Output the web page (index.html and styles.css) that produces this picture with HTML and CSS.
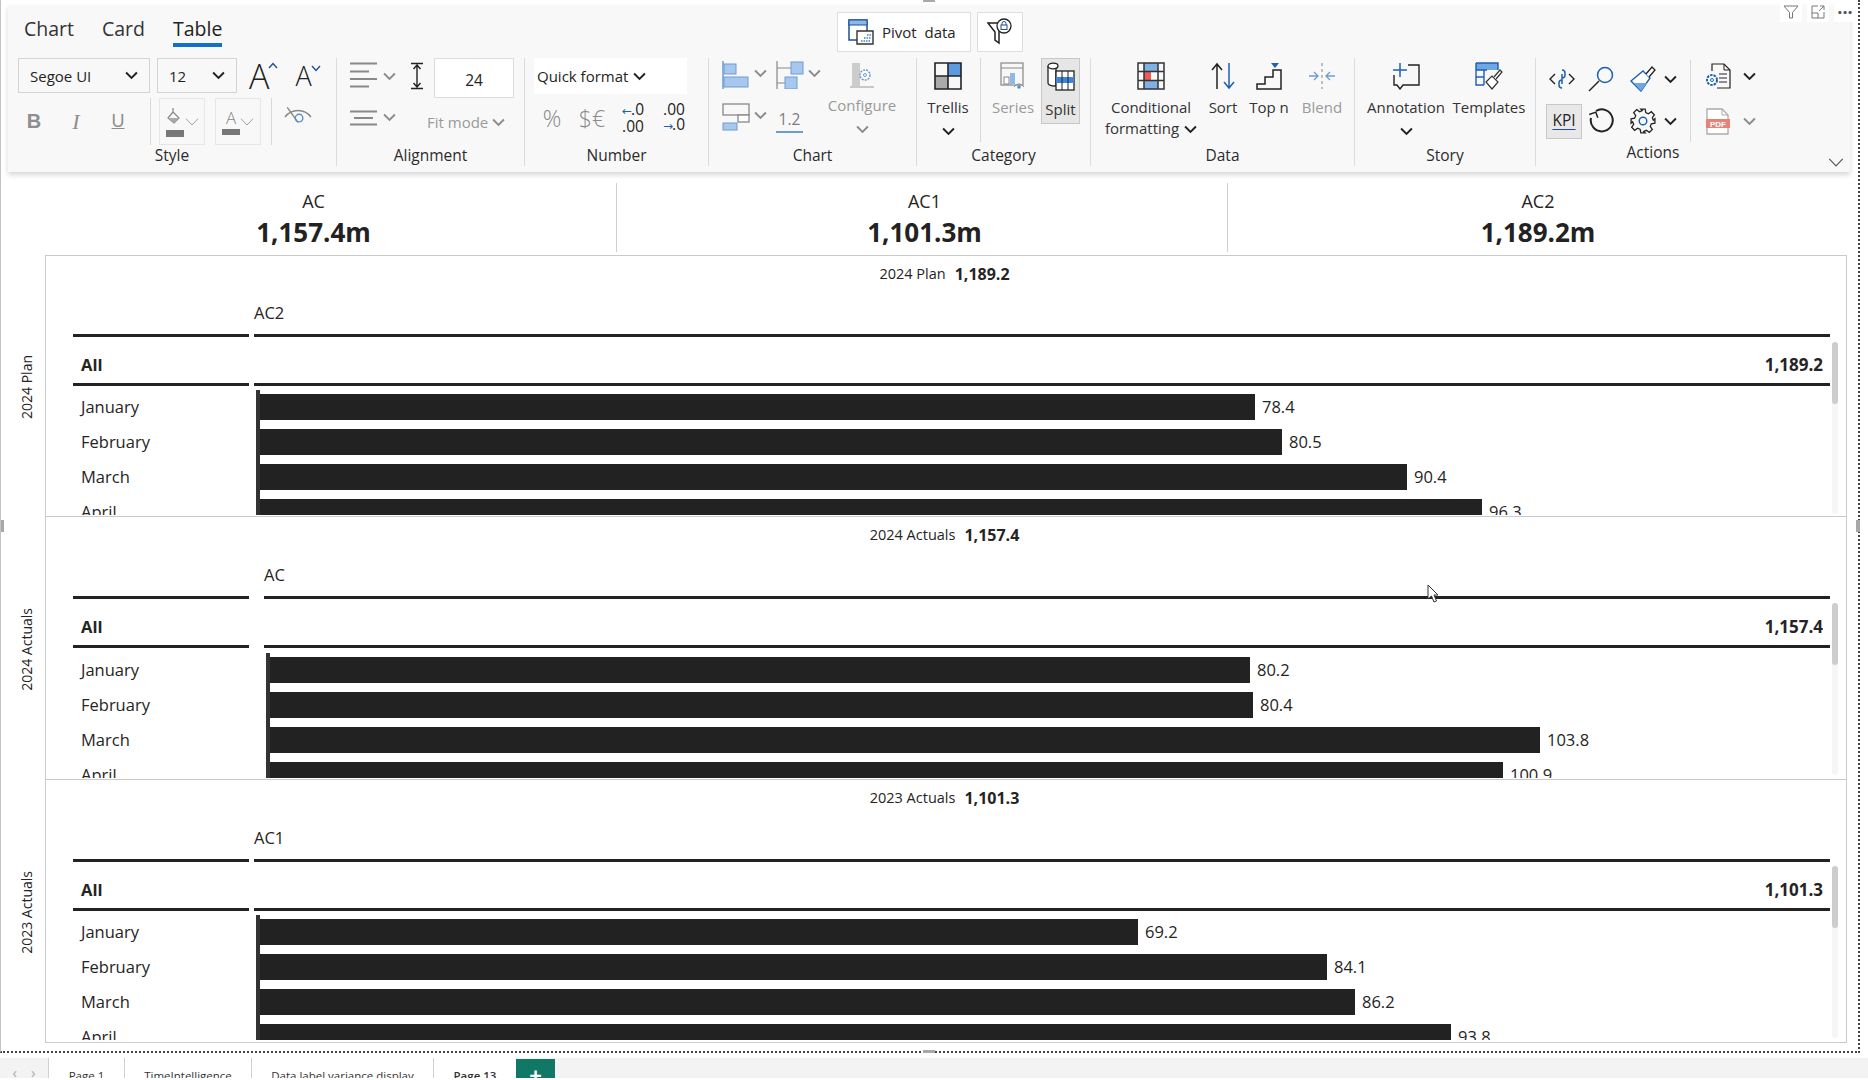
FILE: index.html
```html
<!DOCTYPE html>
<html lang="en">
<head>
    <meta charset="UTF-8">
    <title>Table</title>
    <link rel="stylesheet" href="styles.css">
</head>
<body>

<svg class="sprite" width="0" height="0">
    <symbol id="chev" viewBox="0 0 12 8"><path d="M1 1.2 6 6.2 11 1.2" fill="none" stroke="currentColor" stroke-width="1.8"/></symbol>
    <symbol id="chevThin" viewBox="0 0 14 8"><path d="M1 .8 7 7 13 .8" fill="none" stroke="currentColor" stroke-width="1"/></symbol>
</svg>

<div id="frame">
    <div class="handle handle-top"></div>
    <div class="handle handle-left"></div>
    <div class="handle handle-right"></div>
    <div class="handle handle-bottom"></div>

    <div id="visual-icons">
        <span><svg width="16" height="16" viewBox="0 0 16 16"><path d="M1 2h14L9.5 8.5V14h-3V8.5z" fill="none" stroke="#777"/></svg></span>
        <span><svg width="16" height="16" viewBox="0 0 16 16"><path d="M8 2H2v12h12V8M2 9h6v5M10 2h4v4M14 2 9 7" fill="none" stroke="#777"/></svg></span>
        <span class="dots">&middot;&middot;&middot;</span>
    </div>

    <div id="ribbon">
        <div class="tab-row">
            <div class="tabs">
                <span class="tab">Chart</span>
                <span class="tab">Card</span>
                <span class="tab active">Table</span>
            </div>
            <div class="top-btn pivot-btn">
                <svg width="28" height="28" viewBox="0 0 28 28"><rect x="2" y="2" width="18" height="20" fill="#fff" stroke="#1f4e9c" stroke-width="1.5"/><rect x="2" y="2" width="18" height="5" fill="#8db8e8" stroke="#1f4e9c"/><path d="M10 13h16v13H10z" fill="#fff" stroke="#333" stroke-width="1.4"/><path d="M14 23h10M17 20h7M20 17h4" stroke="#6d9fd8" stroke-width="2" stroke-dasharray="1.5 1"/></svg>
                <span>Pivot&nbsp; data</span>
            </div>
            <div class="top-btn filter-btn">
                <svg width="26" height="28" viewBox="0 0 26 28"><path d="M1 5h17l-6 9v11l-4-3v-8z" fill="#fff" stroke="#222" stroke-width="1.5"/><circle cx="17" cy="8" r="7" fill="#fff" stroke="#222" stroke-width="1.3"/><rect x="14" y="7" width="6" height="4.5" fill="none" stroke="#1f4e9c"/><path d="M15 7V5.5a2 2 0 0 1 4 0V7" fill="none" stroke="#1f4e9c"/></svg>
            </div>
        </div>

        <div class="groups">
            <section class="group group-style">
                <div class="style-row">
                    <div class="select font-select"><span>Segoe UI</span><svg class="chev"><use href="#chev"/></svg></div>
                    <div class="select size-select"><span>12</span><svg class="chev"><use href="#chev"/></svg></div>
                    <span class="grow big-a">A<svg width="10" height="7" viewBox="0 0 10 7"><path d="M1 6 5 1.5 9 6" fill="none" stroke="#1f4e9c" stroke-width="1.4"/></svg></span>
                    <span class="grow small-a">A<svg width="10" height="7" viewBox="0 0 10 7"><path d="M1 1 5 5.5 9 1" fill="none" stroke="#1f4e9c" stroke-width="1.4"/></svg></span>
                </div>
                <div class="style-row second">
                    <span class="fmt fmt-b">B</span>
                    <span class="fmt fmt-i">I</span>
                    <span class="fmt fmt-u">U</span>
                    <span class="vline first"></span>
                    <div class="color-btn">
                        <svg width="20" height="30" viewBox="0 0 20 30"><path d="M8 1v4M3 11l5-6 6 6-5 5z" fill="none" stroke="#888" stroke-width="1.2"/><path d="M3 11h11l-5 5z" fill="#aaa"/><rect x="1" y="23" width="18" height="7" fill="#777"/></svg>
                        <svg class="chev-thin"><use href="#chevThin"/></svg>
                    </div>
                    <div class="color-btn">
                        <span class="a-mark">A<i></i></span>
                        <svg class="chev-thin"><use href="#chevThin"/></svg>
                    </div>
                    <span class="vline second-line"></span>
                    <svg class="eye" width="28" height="24" viewBox="0 0 26 22"><path d="M1 11c6-8 18-8 24 0" fill="none" stroke="#888" stroke-width="1.3"/><path d="M3 2l10 14" stroke="#888" stroke-width="1.3"/><circle cx="14" cy="12" r="3.5" fill="none" stroke="#5b8fc9" stroke-width="1.3"/></svg>
                </div>
                <div class="group-label">Style</div>
            </section>

            <section class="group group-align">
                <div class="align-row">
                    <svg width="28" height="26" viewBox="0 0 28 26"><path d="M0 1.5h27M0 9.5h19M0 17h27M0 24.5h19" stroke="#888" stroke-width="1.8"/></svg>
                    <svg class="chev gray"><use href="#chev"/></svg>
                    <svg class="height-icon" width="12" height="28" viewBox="0 0 12 28"><path d="M0 1.5h12M0 26.5h12M6 3v22M2.500 7 6 3l3.500 4M2.500 21 6 25l3.500-4" fill="none" stroke="#222" stroke-width="1.4"/></svg>
                    <div class="row-input">24</div>
                </div>
                <div class="align-row second">
                    <svg width="28" height="16" viewBox="0 0 28 16"><path d="M0 1.500h27M4 8h19M0 14.500h27" stroke="#888" stroke-width="1.8"/></svg>
                    <svg class="chev gray"><use href="#chev"/></svg>
                    <span class="muted fit">Fit mode</span>
                    <svg class="chev gray"><use href="#chev"/></svg>
                </div>
                <div class="group-label">Alignment</div>
            </section>

            <section class="group group-number">
                <div class="quick"><span>Quick format</span><svg class="chev"><use href="#chev"/></svg></div>
                <div class="num-row">
                    <span class="sym">%</span>
                    <span class="sym">$&euro;</span>
                    <span class="dec"><span><b>&larr;</b>.0</span><span>.00</span></span>
                    <span class="dec"><span>.00</span><span><b>&rarr;</b>.0</span></span>
                </div>
                <div class="group-label">Number</div>
            </section>

            <section class="group group-chart">
                <div class="chart-tools">
                    <div class="chart-grid">
                        <svg width="28" height="28" viewBox="0 0 28 28"><path d="M1 0v28" stroke="#6f9bd1" stroke-width="1.500"/><rect x="2" y="3" width="12" height="10" fill="#a6c8ee" stroke="#6f9bd1"/><rect x="2" y="16" width="24" height="10" fill="#a6c8ee" stroke="#6f9bd1"/></svg>
                        <svg class="chev gray"><use href="#chev"/></svg>
                        <svg width="28" height="28" viewBox="0 0 28 28"><path d="M1 0v28M1 7h15M1 22h8" stroke="#888" stroke-width="1.200"/><rect x="15" y="1" width="12" height="12" fill="#a6c8ee" stroke="#6f9bd1"/><rect x="9" y="16" width="12" height="12" fill="#a6c8ee" stroke="#6f9bd1"/></svg>
                        <svg class="chev gray"><use href="#chev"/></svg>
                        <svg width="28" height="28" viewBox="0 0 28 28"><rect x="1" y="1" width="26" height="11" fill="none" stroke="#888" stroke-width="1.300"/><rect x="16" y="12" width="11" height="7" fill="#fff" stroke="#888" stroke-width="1.300"/><rect x="1" y="20" width="14" height="7" fill="#a6c8ee" stroke="#6f9bd1"/></svg>
                        <svg class="chev gray"><use href="#chev"/></svg>
                        <span class="one-two">1.2</span>
                    </div>
                    <div class="tool tool-configure">
                        <svg width="28" height="26" viewBox="0 0 28 26"><path d="M2 25h24" stroke="#999"/><rect x="4" y="1" width="8" height="24" fill="#ccc"/><circle cx="17" cy="13" r="5" fill="#fff" stroke="#6f9bd1" stroke-width="1.500" stroke-dasharray="2 1"/><circle cx="17" cy="13" r="1.500" fill="none" stroke="#6f9bd1"/></svg>
                        <span class="tool-text muted">Configure</span>
                        <svg class="chev gray"><use href="#chev"/></svg>
                    </div>
                </div>
                <div class="group-label">Chart</div>
            </section>

            <section class="group group-category">
                <div class="tool-line">
                    <div class="tool tool-trellis">
                        <svg width="28" height="28" viewBox="0 0 28 28"><rect x="14" y="1" width="13" height="13" fill="#5b9be0"/><rect x="1" y="14" width="13" height="13" fill="#aaa"/><path d="M1 1h26v26H1zM14 1v26M1 14h26" fill="none" stroke="#222" stroke-width="1.600"/></svg>
                        <span class="tool-text">Trellis</span>
                        <svg class="chev"><use href="#chev"/></svg>
                    </div>
                    <span class="vline cat-line"></span>
                    <div class="tool tool-series">
                        <svg width="26" height="28" viewBox="0 0 26 28"><rect x="1" y="1" width="22" height="22" fill="none" stroke="#888" stroke-width="1.200"/><path d="M1 6h22" stroke="#888"/><rect x="4" y="15" width="5" height="7" fill="#fff" stroke="#888"/><rect x="10" y="11" width="5" height="11" fill="#8db8e8"/><path d="M14 25c3-4 7-4 10 0" fill="none" stroke="#888"/><circle cx="19" cy="25" r="1.800" fill="#5b8fc9"/></svg>
                        <span class="tool-text muted">Series</span>
                    </div>
                    <div class="tool tool-split">
                        <svg width="28" height="30" viewBox="0 0 28 30"><path d="M1 4v17c0 2 4 3 8 3V4" fill="#fff" stroke="#222" stroke-width="1.300"/><ellipse cx="6" cy="4" rx="5" ry="2.800" fill="#fff" stroke="#222" stroke-width="1.300"/><rect x="9" y="9" width="18" height="19" fill="#fff" stroke="#222" stroke-width="1.300"/><rect x="9" y="15" width="18" height="6" fill="#3f86d8"/><path d="M15 9v19M21 9v19" stroke="#222"/></svg>
                        <span class="tool-text">Split</span>
                    </div>
                </div>
                <div class="group-label">Category</div>
            </section>

            <section class="group group-data">
                <div class="tool-line">
                    <div class="tool tool-cond">
                        <svg width="28" height="28" viewBox="0 0 28 28"><rect x="7" y="1" width="14" height="8" fill="#7fb0e6"/><rect x="7" y="19" width="14" height="8" fill="#7fb0e6"/><rect x="7" y="10" width="7" height="9" fill="#ee5a55"/><path d="M1 1h26v26H1zM1 9.500h26M1 18.500h26M7 1v26M21 1v26" fill="none" stroke="#333" stroke-width="1.500"/></svg>
                        <span class="tool-text">Conditional</span>
                        <span class="tool-text">formatting <svg class="chev"><use href="#chev"/></svg></span>
                    </div>
                    <div class="tool tool-sort">
                        <svg width="26" height="28" viewBox="0 0 26 28"><path d="M7 27V2M2 8l5-6 5 6" fill="none" stroke="#222" stroke-width="1.500"/><path d="M19 1v25M14 20l5 6 5-6" fill="none" stroke="#1f5fb0" stroke-width="1.500"/></svg>
                        <span class="tool-text">Sort</span>
                    </div>
                    <div class="tool tool-topn">
                        <svg width="26" height="28" viewBox="0 0 26 28"><path d="M1 27h24V8h-8v7H9v7H1z" fill="none" stroke="#222" stroke-width="1.500"/><path d="M15 1h8l-4 5z" fill="#1f5fb0"/></svg>
                        <span class="tool-text">Top n</span>
                    </div>
                    <div class="tool tool-blend">
                        <svg width="28" height="28" viewBox="0 0 28 28"><path d="M14 1v26" stroke="#aaa" stroke-dasharray="3 3" stroke-width="1.500"/><path d="M1 14h9M6 10l4 4-4 4M27 14h-9M22 10l-4 4 4 4" fill="none" stroke="#6f9bd1" stroke-width="1.300"/></svg>
                        <span class="tool-text muted">Blend</span>
                    </div>
                </div>
                <div class="group-label">Data</div>
            </section>

            <section class="group group-story">
                <div class="tool-line">
                    <div class="tool tool-anno">
                        <svg width="28" height="28" viewBox="0 0 28 28"><path d="M16 3h11v20H11l-3 4-3-4H2V13" fill="none" stroke="#222" stroke-width="1.400"/><path d="M8 1v14M1 8h14" stroke="#1f5fb0" stroke-width="1.500"/></svg>
                        <span class="tool-text">Annotation</span>
                        <svg class="chev"><use href="#chev"/></svg>
                    </div>
                    <div class="tool tool-templates">
                        <svg width="28" height="28" viewBox="0 0 28 28"><rect x="1" y="1" width="22" height="7" fill="#6fa6e4"/><path d="M1 1h22v7M1 1v22h8M1 8h11M1 15h8M9 8v15" fill="none" stroke="#1f5fb0" stroke-width="1.400"/><path d="M11 20l6-6 6 6-6 7z" fill="#fff" stroke="#333" stroke-width="1.200"/><path d="M19 15l6-7 2 2-6 7" fill="#fff" stroke="#333" stroke-width="1.200"/></svg>
                        <span class="tool-text">Templates</span>
                    </div>
                </div>
                <div class="group-label">Story</div>
            </section>

            <section class="group group-actions">
                <div class="actions-body">
                    <div class="actions-grid">
                        <svg width="26" height="22" viewBox="0 0 26 22"><path d="M6 6l-5 5 5 5M20 6l5 5-5 5" fill="none" stroke="#222" stroke-width="1.400"/><path d="M13 2a3 3 0 0 1 3 3v2a3 3 0 0 1-3 3M13 20a3 3 0 0 1-3-3v-2a3 3 0 0 1 3-3M13 6v10" fill="none" stroke="#1f5fb0" stroke-width="1.500"/></svg>
                        <svg width="26" height="26" viewBox="0 0 26 26"><circle cx="17" cy="9" r="7.500" fill="none" stroke="#1f5fb0" stroke-width="1.500"/><path d="M11 15 1 25" stroke="#222" stroke-width="1.500"/></svg>
                        <svg width="26" height="26" viewBox="0 0 26 26"><path d="M1 15 13 5l7 7-9 13z" fill="#fff" stroke="#1f5fb0" stroke-width="1.400"/><path d="M4 17h13l-6 8z" fill="#6fa6e4"/><path d="M16 8l6-7 3 3-6 7" fill="#fff" stroke="#222" stroke-width="1.300"/></svg>
                        <svg class="chev"><use href="#chev"/></svg>
                        <span class="kpi-btn">KPI</span>
                        <svg width="26" height="26" viewBox="0 0 26 26"><path d="M8 3a11 11 0 1 1-5 7" fill="none" stroke="#222" stroke-width="2"/><path d="M2 5l7 0 0 6" fill="none" stroke="#222" stroke-width="1.500" transform="rotate(-20 6 8)"/></svg>
                        <svg width="26" height="26" viewBox="0 0 24 24"><circle cx="12" cy="12" r="3.500" fill="none" stroke="#1f5fb0" stroke-width="1.300"/><path d="M10 1h4l.6 3.300 2.300 1 2.800-1.900 2.800 2.800-1.900 2.800 1 2.300L23 10v4l-3.300.6-1 2.300 1.900 2.800-2.800 2.800-2.800-1.900-2.300 1L14 23h-4l-.6-3.300-2.300-1-2.800 1.900-2.800-2.800 1.900-2.800-1-2.300L1 14v-4l3.300-.6 1-2.300-1.900-2.800 2.800-2.800 2.800 1.900 2.300-1z" fill="none" stroke="#222" stroke-width="1.200"/></svg>
                        <svg class="chev"><use href="#chev"/></svg>
                    </div>
                    <span class="vline actions-line"></span>
                    <div class="export-col">
                        <div class="export-row">
                            <svg width="26" height="26" viewBox="0 0 26 26"><path d="M7 8V1h12l6 6v18H12" fill="none" stroke="#222" stroke-width="1.200"/><path d="M19 1v6h6M14 11h8M14 15h8M14 19h8" fill="none" stroke="#222"/><circle cx="7" cy="17" r="5" fill="#fff" stroke="#1f5fb0" stroke-width="2" stroke-dasharray="2.500 1"/><circle cx="7" cy="17" r="1.500" fill="none" stroke="#1f5fb0"/></svg>
                            <svg class="chev"><use href="#chev"/></svg>
                        </div>
                        <div class="export-row">
                            <svg width="26" height="27" viewBox="0 0 26 27"><path d="M2 26V1h15l6 6v19z" fill="#fff" stroke="#aaa" stroke-width="1.300"/><path d="M17 1v6h6" fill="none" stroke="#aaa"/><rect x="1" y="11" width="24" height="9" fill="#e98276"/><text x="13" y="18.500" class="pdf-text">PDF</text></svg>
                            <svg class="chev gray"><use href="#chev"/></svg>
                        </div>
                    </div>
                </div>
                <div class="group-label actions-label">Actions</div>
                <svg class="collapse"><use href="#chevThin"/></svg>
            </section>
        </div>
    </div>

    <div id="kpis">
        <div class="kpi"><div class="kpi-name">AC</div><div class="kpi-value">1,157.4m</div></div>
        <div class="kpi"><div class="kpi-name">AC1</div><div class="kpi-value">1,101.3m</div></div>
        <div class="kpi"><div class="kpi-name">AC2</div><div class="kpi-value">1,189.2m</div></div>
    </div>

    <div id="panels">
        <div class="panel-row row-plan">
            <div class="side-label"><span>2024 Plan</span></div>
            <div class="panel">
                <div class="panel-title"><span>2024 Plan</span><b>1,189.2</b></div>
                <div class="table-head"><div class="cat-cell"></div><div class="val-cell">AC2</div></div>
                <div class="table-total"><div class="cat-cell">All</div><div class="val-cell">1,189.2</div></div>
                <div class="rows">
                    <div class="row"><div class="cat-cell">January</div><div class="val-cell"><div class="bar" style="width: 995px"></div><span>78.4</span></div></div>
                    <div class="row"><div class="cat-cell">February</div><div class="val-cell"><div class="bar" style="width: 1022px"></div><span>80.5</span></div></div>
                    <div class="row"><div class="cat-cell">March</div><div class="val-cell"><div class="bar" style="width: 1147px"></div><span>90.4</span></div></div>
                    <div class="row"><div class="cat-cell">April</div><div class="val-cell"><div class="bar" style="width: 1222px"></div><span>96.3</span></div></div>
                </div>
                <div class="scrollbar"><div class="thumb"></div></div>
            </div>
        </div>
        <div class="panel-row">
            <div class="side-label"><span>2024 Actuals</span></div>
            <div class="panel wide-gap">
                <div class="panel-title"><span>2024 Actuals</span><b>1,157.4</b></div>
                <div class="table-head"><div class="cat-cell"></div><div class="val-cell">AC</div></div>
                <div class="table-total"><div class="cat-cell">All</div><div class="val-cell">1,157.4</div></div>
                <div class="rows">
                    <div class="row"><div class="cat-cell">January</div><div class="val-cell"><div class="bar" style="width: 980px"></div><span>80.2</span></div></div>
                    <div class="row"><div class="cat-cell">February</div><div class="val-cell"><div class="bar" style="width: 983px"></div><span>80.4</span></div></div>
                    <div class="row"><div class="cat-cell">March</div><div class="val-cell"><div class="bar" style="width: 1270px"></div><span>103.8</span></div></div>
                    <div class="row"><div class="cat-cell">April</div><div class="val-cell"><div class="bar" style="width: 1233px"></div><span>100.9</span></div></div>
                </div>
                <div class="scrollbar"><div class="thumb"></div></div>
            </div>
        </div>
        <div class="panel-row row-last">
            <div class="side-label"><span>2023 Actuals</span></div>
            <div class="panel">
                <div class="panel-title"><span>2023 Actuals</span><b>1,101.3</b></div>
                <div class="table-head"><div class="cat-cell"></div><div class="val-cell">AC1</div></div>
                <div class="table-total"><div class="cat-cell">All</div><div class="val-cell">1,101.3</div></div>
                <div class="rows">
                    <div class="row"><div class="cat-cell">January</div><div class="val-cell"><div class="bar" style="width: 878px"></div><span>69.2</span></div></div>
                    <div class="row"><div class="cat-cell">February</div><div class="val-cell"><div class="bar" style="width: 1067px"></div><span>84.1</span></div></div>
                    <div class="row"><div class="cat-cell">March</div><div class="val-cell"><div class="bar" style="width: 1095px"></div><span>86.2</span></div></div>
                    <div class="row"><div class="cat-cell">April</div><div class="val-cell"><div class="bar" style="width: 1191px"></div><span>93.8</span></div></div>
                </div>
                <div class="scrollbar"><div class="thumb"></div></div>
            </div>
        </div>
    </div>

    <svg id="cursor" width="12" height="20" viewBox="0 0 12 20"><path d="M1 1v14l3.500-3 2.500 6 2.500-1-2.500-6H11z" fill="#fff" stroke="#333"/></svg>
</div>

<div id="page-tabs">
    <div class="page-nav"><span>&lsaquo;</span><span>&rsaquo;</span></div>
    <div class="page-tab tab-page1">Page 1</div>
    <div class="page-tab tab-time">TimeIntelligence</div>
    <div class="page-tab tab-label">Data label variance display</div>
    <div class="page-tab tab-13">Page 13</div>
    <div class="page-add">+</div>
</div>

</body>
</html>
```

FILE: styles.css
```css
* {
    box-sizing: border-box;
}
html, body {
    margin: 0;
    height: 1080px;
    overflow: hidden;
}
body {
    font-family: "Open Sans", "Noto Sans", sans-serif;
    color: #252423;
    background: #fff;
}
.sprite {
    position: absolute;
}
svg {
    flex: none;
    display: block;
}
.chev {
    width: 13px;
    height: 9px;
    color: #222;
}
.chev.gray {
    color: #8c8c8c;
}
.chev-thin {
    width: 14px;
    height: 8px;
    color: #a0a0a0;
}
.vline {
    display: block;
    width: 1px;
    background: #d8d8d8;
}

/* frame around the visual */
#frame {
    position: relative;
    width: 1860px;
    height: 1053px;
    padding: 5px 0 0 7px;
    border-left: 1px solid #c4c4c4;
    border-right: 2px dotted #444;
    border-bottom: 2px dotted #444;
}
.handle {
    position: absolute;
    background: #a8a8a8;
}
.handle-top {
    top: 0;
    left: 922px;
    width: 12px;
    height: 2px;
}
.handle-bottom {
    bottom: -2px;
    left: 922px;
    width: 12px;
    height: 3px;
}
.handle-left {
    top: 520px;
    left: 0;
    width: 3px;
    height: 12px;
}
.handle-right {
    top: 520px;
    right: -2px;
    width: 4px;
    height: 12px;
}
#visual-icons {
    position: absolute;
    top: 2px;
    right: 2px;
    display: flex;
    gap: 5px;
    z-index: 3;
}
#visual-icons span {
    width: 22px;
    height: 20px;
    background: #fff;
    display: flex;
    align-items: center;
    justify-content: center;
}
#visual-icons .dots {
    font-size: 18px;
    font-weight: 700;
    color: #555;
}
#cursor {
    position: absolute;
    left: 1426px;
    top: 584px;
}

/* ribbon */
#ribbon {
    width: 1842px;
    height: 167px;
    background: #f8f8f8;
    box-shadow: 0 3px 5px rgba(0, 0, 0, 0.16);
    position: relative;
    z-index: 2;
}
.tab-row {
    display: flex;
    height: 51px;
}
.tabs {
    width: 829px;
    padding: 9px 0 0 16px;
    display: flex;
    gap: 28px;
    font-size: 19.5px;
}
.tab {
    height: 33px;
    line-height: 30px;
    color: #333;
}
.tab.active {
    color: #222;
    border-bottom: 4px solid #1170c8;
}
.top-btn {
    margin-top: 7px;
    height: 40px;
    background: #fff;
    border: 1px solid #dedede;
    display: flex;
    align-items: center;
}
.pivot-btn {
    width: 134px;
    padding-left: 9px;
    gap: 7px;
    font-size: 15px;
}
.filter-btn {
    width: 46px;
    margin-left: 6px;
    justify-content: center;
}
.groups {
    display: flex;
    height: 110px;
    padding-top: 2px;
}
.group {
    position: relative;
    display: flex;
    flex-direction: column;
    flex: none;
    height: 108px;
    border-left: 1px solid #dcdcdc;
}
.group-label {
    margin-top: auto;
    margin-bottom: 1px;
    height: 20px;
    line-height: 20px;
    text-align: center;
    font-size: 15.5px;
    font-weight: 500;
    color: #2b2b2b;
}
.tool {
    display: flex;
    flex-direction: column;
    align-items: center;
    flex: none;
    padding-top: 4px;
}
.tool-text {
    font-size: 15px;
    line-height: 21px;
    white-space: nowrap;
    color: #333;
}
.tool-text .chev {
    display: inline-block;
    margin-left: 1px;
}
.tool > svg + .tool-text {
    margin-top: 7px;
}
.tool > .tool-text + .chev {
    margin-top: 9px;
}
.tool-line {
    display: flex;
    align-items: flex-start;
}
.muted, .tool-text.muted {
    color: #9a9a9a;
}

/* style group */
.group-style {
    width: 328px;
    border-left: none;
    padding-left: 10px;
}
.group-style .group-label {
    margin-left: -10px;
}
.style-row {
    display: flex;
    align-items: center;
    height: 36px;
}
.style-row.second {
    height: 47px;
    margin: 5px 0 0 -5px;
}
.select {
    height: 35px;
    border: 1px solid #d4d4d4;
    display: flex;
    align-items: center;
    justify-content: space-between;
    padding: 0 11px 0 11px;
    font-size: 15px;
    flex: none;
}
.font-select {
    width: 132px;
}
.size-select {
    width: 80px;
    margin-left: 7px;
}
.grow {
    display: flex;
    align-items: flex-start;
    font-weight: 300;
    color: #222;
    line-height: 1;
}
.grow svg {
    margin: 3px 0 0 -1px;
}
.big-a {
    font-size: 34px;
    margin-left: 12px;
}
.small-a {
    font-size: 27px;
    margin-left: 17px;
}
.fmt {
    width: 42px;
    text-align: center;
    font-size: 20px;
    color: #8e8e8e;
    font-family: "Liberation Sans", sans-serif;
}
.fmt-b {
    font-weight: 700;
}
.fmt-i {
    font-style: italic;
    font-family: "Liberation Serif", serif;
    font-size: 22px;
}
.fmt-u {
    text-decoration: underline;
    font-size: 18px;
}
.vline.first {
    height: 47px;
    margin: 0 8px 0 11px;
}
.color-btn {
    width: 46px;
    height: 47px;
    border: 1px solid #e6e6e6;
    margin-right: 10px;
    display: flex;
    align-items: center;
    justify-content: center;
    gap: 0;
    flex: none;
}
.a-mark {
    display: flex;
    flex-direction: column;
    align-items: center;
    font-size: 17px;
    line-height: 20px;
    color: #888;
    font-weight: 300;
    width: 18px;
}
.a-mark i {
    display: block;
    width: 18px;
    height: 6px;
    background: #777;
    margin-top: 1px;
}
.vline.second-line {
    height: 47px;
    margin-right: 12px;
}
.eye {
    margin-bottom: 10px;
}

/* alignment group */
.group-align {
    width: 188px;
    padding-left: 13px;
}
.group-align .group-label {
    margin-left: -13px;
}
.align-row {
    display: flex;
    align-items: flex-start;
    height: 42px;
    padding-top: 4px;
}
.align-row .chev {
    margin: 10px 0 0 5px;
}
.height-icon {
    margin-left: 15px;
}
.row-input {
    width: 80px;
    height: 40px;
    margin: -4px 0 0 11px;
    background: #fff;
    border: 1px solid #dcdcdc;
    text-align: center;
    font-size: 15.5px;
    line-height: 42px;
}
.align-row.second {
    padding-top: 10px;
    height: 38px;
}
.align-row.second .chev {
    margin-top: 3px;
}
.fit {
    font-size: 15px;
    margin-left: 31px;
    line-height: 24px;
    white-space: nowrap;
}
.align-row.second .fit + .chev {
    margin: 8px 0 0 4px;
}

/* number group */
.group-number {
    width: 184px;
    padding-left: 9px;
}
.group-number .group-label {
    margin-left: -9px;
}
.quick {
    width: 153px;
    height: 36px;
    background: #fff;
    display: flex;
    align-items: center;
    padding-left: 3px;
    gap: 5px;
    font-size: 15px;
    flex: none;
}
.num-row {
    display: flex;
    align-items: center;
    margin-top: 8px;
}
.sym {
    font-size: 23px;
    line-height: 30px;
    font-weight: 300;
    color: #8a8a8a;
    width: 42px;
    text-align: center;
    margin-left: -3px;
    white-space: nowrap;
}
.sym + .sym {
    margin-left: -2px;
}
.dec {
    display: flex;
    flex-direction: column;
    width: 40px;
    align-items: center;
    font-size: 15.5px;
    line-height: 15px;
    color: #222;
}
.dec:last-child {
    margin-left: 1px;
}
.dec b {
    font-family: "DejaVu Sans", sans-serif;
    font-weight: 400;
    color: #1f5fb0;
    font-size: 12px;
    letter-spacing: -1px;
}

/* chart group */
.group-chart {
    width: 208px;
}
.chart-tools {
    display: flex;
}
.chart-grid {
    display: grid;
    grid-template-columns: 28px 26px 28px 24px;
    grid-auto-rows: 42px;
    align-items: start;
    padding: 3px 0 0 13px;
    width: 133px;
}
.chart-grid .chev {
    margin: 8px 0 0 4px;
}
.one-two {
    font-size: 15.5px;
    color: #7d7d7d;
    border-bottom: 2px solid #6f9bd1;
    width: 27px;
    line-height: 23px;
    text-align: center;
    margin-top: 5px;
    white-space: nowrap;
    grid-column: 3;
}
.tool-configure {
    width: 72px;
    margin-left: -16px;
}

/* category group */
.group-category {
    width: 174px;
}
.tool-trellis {
    width: 62px;
}
.vline.cat-line {
    height: 84px;
    margin-left: 1px;
}
.tool-series {
    width: 46px;
    margin-left: 9px;
}
.tool-split {
    width: 39px;
    height: 66px;
    margin: 0 0 0 5px;
    padding-top: 3px;
    background: #e6e6e6;
    border: 1px solid #c8c8c8;
}
.tool > svg + .tool-text.split-text, .tool-split .tool-text {
    margin-top: 2px;
}

/* data group */
.group-data {
    width: 264px;
}
.tool-cond {
    width: 120px;
}
.tool-sort {
    width: 36px;
    margin-left: -6px;
}
.tool-topn {
    width: 50px;
    margin-left: 3px;
}
.tool-blend {
    width: 44px;
    margin-left: 6px;
}

/* story group */
.group-story {
    width: 181px;
}
.tool-anno {
    width: 96px;
    margin-left: 3px;
}
.tool-templates {
    width: 74px;
    margin-left: -2px;
}

/* actions group */
.group-actions {
    width: 317px;
}
.actions-body {
    display: flex;
}
.actions-grid {
    display: grid;
    grid-template-columns: 42px 42px 34px 20px;
    grid-auto-rows: 42px;
    align-items: center;
    justify-items: start;
    padding: 0 0 0 10px;
    width: 154px;
    height: 84px;
}
.actions-grid > svg:first-child {
    margin-left: 3px;
}
.kpi-btn {
    width: 36px;
    height: 35px;
    background: #e8e8e8;
    border: 1px solid #c8c8c8;
    text-align: center;
    line-height: 30px;
    font-size: 15.5px;
    font-weight: 500;
    text-decoration: underline;
    text-decoration-color: #1f4e9c;
    text-underline-offset: 3px;
}
.vline.actions-line {
    height: 82px;
    margin-top: 2px;
}
.export-col {
    margin-left: 14px;
    padding-top: 5px;
}
.export-row {
    display: flex;
    align-items: center;
    gap: 12px;
    height: 26px;
}
.export-row + .export-row {
    margin-top: 19px;
}
.pdf-text {
    font-family: "Liberation Sans", sans-serif;
    font-size: 8px;
    font-weight: 700;
    text-anchor: middle;
    fill: #fff;
}
.group-label.actions-label {
    width: 234px;
    margin-bottom: 4px;
}
.collapse {
    position: absolute;
    right: 8px;
    top: 100px;
    width: 16px;
    height: 9px;
    color: #555;
}

/* kpi row */
#kpis {
    display: flex;
    height: 83px;
    padding: 11px 0 0 0;
    margin-left: -2px;
}
.kpi {
    text-align: center;
    height: 69px;
    width: 611px;
    border-right: 1px solid #cfcfcf;
    padding: 5px 0 0 5px;
}
.kpi:last-child {
    width: 615px;
    border-right: none;
}
.kpi-name {
    font-size: 18px;
    line-height: 27px;
}
.kpi-value {
    font-size: 26px;
    font-weight: 700;
    line-height: 34px;
    color: #222;
}

/* trellis panels */
#panels {
    height: 788px;
    display: flex;
    flex-direction: column;
}
.panel-row {
    display: flex;
    height: 263px;
}
.row-plan {
    height: 261px;
}
.row-last {
    height: 264px;
}
.side-label {
    width: 37px;
    flex: none;
    display: flex;
    align-items: center;
    justify-content: center;
    padding-right: 1px;
}
.side-label span {
    writing-mode: vertical-rl;
    transform: rotate(180deg);
    font-size: 14px;
    white-space: nowrap;
    margin-top: 3px;
}
.panel {
    position: relative;
    width: 1802px;
    height: 100%;
    border: 1px solid #c9c9d0;
    border-bottom: none;
    padding-left: 27px;
    overflow: hidden;
}
.row-last .panel {
    border-bottom: 1px solid #c9c9d0;
}
.panel-title {
    height: 37px;
    display: flex;
    align-items: center;
    justify-content: center;
    gap: 9px;
    font-size: 14.500px;
    padding: 0 30px 2px 0;
}
.panel-title b {
    font-size: 16px;
    font-weight: 700;
}
.table-head, .table-total, .row {
    display: flex;
    gap: 5px;
}
.wide-gap .table-head, .wide-gap .table-total, .wide-gap .row {
    gap: 15px;
}
.cat-cell {
    width: 176px;
    flex: none;
    border-bottom: 3px solid #222;
}
.table-head .val-cell, .table-total .val-cell {
    width: 1576px;
    border-bottom: 3px solid #222;
}
.wide-gap .table-head .val-cell, .wide-gap .table-total .val-cell {
    width: 1566px;
}
.table-head {
    height: 46px;
    font-size: 16.500px;
    line-height: 24px;
    padding-top: 9px;
}
.table-head .cat-cell, .table-head .val-cell {
    height: 36px;
}
.row-plan .table-head {
    height: 45px;
    padding-top: 8px;
}
.table-total {
    height: 48px;
    font-size: 16.500px;
    font-weight: 700;
    line-height: 24px;
}
.table-total .cat-cell, .table-total .val-cell {
    padding-top: 15px;
    height: 48px;
}
.table-total .cat-cell {
    padding-left: 8px;
}
.table-total .val-cell {
    text-align: right;
    padding-right: 7px;
    font-size: 17px;
}
.rows {
    height: 125px;
    margin-top: 5px;
    overflow: hidden;
}
.row-plan .rows, .row-last .rows {
    margin-top: 4px;
}
.row {
    height: 35px;
    font-size: 16.500px;
}
.row .cat-cell {
    border-bottom: none;
    padding-left: 8px;
    line-height: 34px;
}
.row .val-cell {
    flex: 1;
    display: flex;
    align-items: flex-start;
    margin-left: 2px;
    padding-top: 4px;
    border-left: 4px solid #333;
    line-height: 26px;
}
.bar {
    height: 26px;
    background: #222;
    margin-right: 7px;
}
.scrollbar {
    position: absolute;
    top: 86px;
    left: 1786px;
    width: 6px;
    height: 172px;
    background: #f6f6f6;
    border-radius: 3px;
}
.thumb {
    height: 62px;
    background: #cdcdcd;
    border-radius: 3px;
}

/* report page tabs */
#page-tabs {
    margin-top: 5px;
    height: 20px;
    display: flex;
    background: #f3f3f3;
    font-size: 11.500px;
    color: #333;
}
.page-nav {
    width: 48px;
    display: flex;
    justify-content: center;
    gap: 14px;
    color: #aaa;
    font-size: 15px;
    line-height: 28px;
}
.page-tab {
    background: #fff;
    border-left: 1px solid #d0d0d0;
    text-align: center;
    line-height: 36px;
    overflow: hidden;
    white-space: nowrap;
}
.tab-page1 {
    width: 76px;
}
.tab-time {
    width: 127px;
}
.tab-label {
    width: 182px;
}
.tab-13 {
    width: 83px;
    font-weight: 600;
}
.page-add {
    width: 39px;
    margin-top: 1px;
    background: #117865;
    color: #fff;
    font-size: 22px;
    font-weight: 700;
    text-align: center;
    line-height: 30px;
    overflow: hidden;
}
```
